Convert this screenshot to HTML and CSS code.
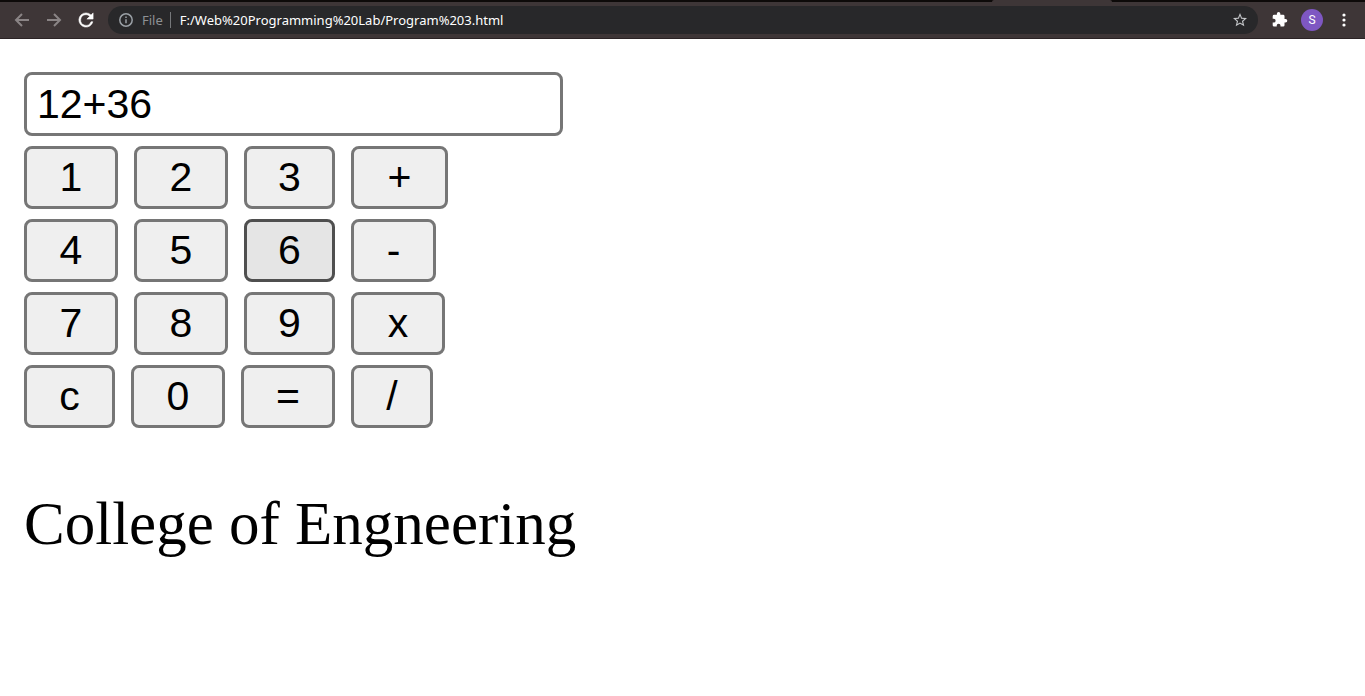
FILE: index.html
```html
<!DOCTYPE html>
<html lang="en">
<head>
<meta charset="utf-8">
<title>Calculator</title>
<link rel="stylesheet" href="styles.css">
</head>
<body>
<header class="browser">
  <div class="tab-strip"><span class="active-tab"></span></div>
  <div class="toolbar">
    <button class="tool dim" type="button" aria-label="Back"><svg viewBox="0 0 16 16"><path d="M15 8H2M8 2L2 8l6 6"/></svg></button>
    <button class="tool dim" type="button" aria-label="Forward"><svg viewBox="0 0 16 16"><path d="M1 8h13M8 2l6 6-6 6"/></svg></button>
    <button class="tool" type="button" aria-label="Reload"><svg class="solid" viewBox="3 3 18 18"><path d="M17.65 6.35A7.96 7.96 0 0 0 12 4a8 8 0 1 0 7.73 10h-2.08A6 6 0 1 1 12 6c1.66 0 3.14.69 4.22 1.78L13 11h7V4z" stroke="currentColor" stroke-width=".6"/></svg></button>
    <div class="omnibox">
      <svg class="info" viewBox="0 0 14 14"><circle cx="7" cy="7" r="6.2"/><path d="M7 6.2v4M7 3.6v1.5"/></svg>
      <span class="scheme">File</span>
      <input class="address" type="text" aria-label="Address" value="F:/Web%20Programming%20Lab/Program%203.html">
      <button class="star" type="button" aria-label="Bookmark"><svg viewBox="2 2 20 20"><path d="M22 9.24l-7.19-.62L12 2 9.19 8.63 2 9.24l5.46 4.73L5.82 21 12 17.27 18.18 21l-1.63-7.03zM12 15.4l-3.76 2.27 1-4.28-3.32-2.88 4.38-.38L12 6.1l1.71 4.04 4.38.38-3.32 2.88 1 4.28z"/></svg></button>
    </div>
    <button class="tool" type="button" aria-label="Extensions"><svg class="solid" viewBox="1 1 23 23"><path d="M20.5 11H19V7a2 2 0 0 0-2-2h-4V3.5a2.5 2.5 0 0 0-5 0V5H4a2 2 0 0 0-2 2v3.8h1.5a2.7 2.7 0 0 1 0 5.4H2V20a2 2 0 0 0 2 2h3.8v-1.5a2.7 2.7 0 0 1 5.4 0V22H17a2 2 0 0 0 2-2v-4h1.5a2.5 2.5 0 0 0 0-5z"/></svg></button>
    <button class="avatar" type="button">S</button>
    <button class="tool" type="button" aria-label="Menu"><svg class="solid" viewBox="0 0 16 16"><circle cx="8" cy="3" r="1.6"/><circle cx="8" cy="8" r="1.6"/><circle cx="8" cy="13" r="1.6"/></svg></button>
  </div>
</header>
<main class="page">
  <form class="calculator">
    <input class="display" type="text" aria-label="Display" value="12+36">
    <div class="keys"><button class="key" type="button">1</button><button class="key" type="button">2</button><button class="key narrow" type="button">3</button><button class="key plus" type="button">+</button></div>
    <div class="keys"><button class="key" type="button">4</button><button class="key" type="button">5</button><button class="key narrow hovered" type="button">6</button><button class="key minus" type="button">-</button></div>
    <div class="keys"><button class="key" type="button">7</button><button class="key" type="button">8</button><button class="key narrow" type="button">9</button><button class="key" type="button">x</button></div>
    <div class="keys"><button class="key narrow" type="button">c</button><button class="key" type="button">0</button><button class="key" type="button">=</button><button class="key divide" type="button">/</button></div>
  </form>
  <p class="caption">College of Engneering</p>
</main>
</body>
</html>
```
FILE: styles.css
```css
* { box-sizing: border-box; }
body { margin: 0; background: #fff; color: #000; }
button, input { margin: 0; font: inherit; color: inherit; }

.browser {
  background: #3e3637;
  border-bottom: 1px solid #2b2325;
  font: 13px/18px "Noto Sans", sans-serif;
  color: #fff;
}
.tab-strip { display: flex; justify-content: flex-end; height: 2px; padding-right: 253px; background: #0d0a09; }
.active-tab { width: 120px; background: #3e3637; border-radius: 2px 2px 0 0; }
.toolbar { display: flex; align-items: center; height: 36px; padding: 0 13px 0 14px; gap: 16px; }
.tool { display: flex; flex: none; width: 16px; padding: 0; border: 0; background: none; }
.tool svg { width: 16px; height: 16px; fill: none; stroke: currentColor; stroke-width: 2; }
.tool .solid { fill: currentColor; stroke: none; }
.dim { color: #8a8485; }
.omnibox {
  display: flex;
  align-items: center;
  flex: 1;
  min-width: 0;
  height: 28px;
  margin-left: -2px;
  margin-right: -2px;
  padding: 0 11px;
  border-radius: 14px;
  background: #28282a;
}
.info { flex: none; width: 14px; height: 14px; fill: none; stroke: #9aa0a6; stroke-width: 1.5; }
.scheme { margin-left: 9px; padding-right: 7px; border-right: 1px solid #76787b; color: #8e9195; line-height: 16px; }
.address { flex: 1; min-width: 0; height: 20px; padding: 0; margin-left: 9px; border: 0; background: none; outline: 0; font-size: 13px; }
.star { display: flex; padding: 0; border: 0; background: none; }
.star svg { width: 14px; height: 14px; fill: #c4c6c9; }
.avatar { flex: none; width: 22px; height: 22px; margin: 0 -3px; padding: 0; border: 0; border-radius: 50%; background: #7e57c2; font: 12px/22px Roboto, sans-serif; }

.page { padding: 33px 24px; }
.calculator { display: flex; flex-direction: column; align-items: flex-start; gap: 10px; font: 41px/48px "Liberation Sans", Arial, sans-serif; }
.display { width: 539px; max-width: 100%; height: 64px; padding: 0 10px; border: 3px solid #767676; border-radius: 8px; background: #fff; }
.keys { display: flex; gap: 16px; }
.key { width: 94px; height: 63px; padding: 0 0 1px; border: 3px solid #767676; border-radius: 8px; background: #efefef; }
.narrow { width: 91px; }
.plus { width: 97px; }
.minus { width: 85px; }
.divide { width: 82px; }
.hovered { border-color: #4f4f4f; background: #e5e5e5; }
.caption { margin: 61px 0 0; font: 61px/70px "Liberation Serif", "Times New Roman", serif; }
```
